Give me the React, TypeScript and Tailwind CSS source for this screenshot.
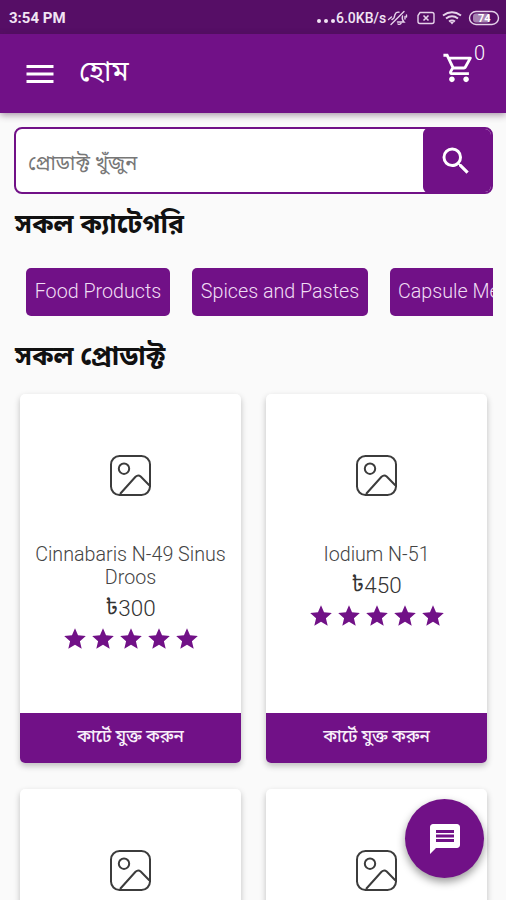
import React from "react";
import { MdMenu, MdOutlineShoppingCart, MdSearch, MdMessage, MdStar } from "react-icons/md";

function PlaceholderIcon() {
  return (
    <svg width="42" height="42" viewBox="0 0 42 42" fill="none" stroke="#3c3c3c" strokeWidth="2">
      <rect x="1" y="1" width="39" height="39" rx="8.5" />
      <circle cx="14" cy="13.7" r="5.2" />
      <path d="M10 39 L25.5 21.8 Q28.1 19.3 30.7 21.5 L39.5 30.5" />
    </svg>
  );
}

function StatusIcons() {
  return (
    <svg width="116" height="20" viewBox="0 0 116 20" fill="none" stroke="#e6d3ea" strokeWidth="1.4">
      <g strokeWidth="1.4" strokeLinecap="round">
        <path d="M5 11.5 Q7.5 10.5 7.8 7 Q8.8 3.8 12 4.2 M15.5 8 Q14.5 11.5 17 14 L10.5 14 M11 16 Q12.5 17 14 15.5" />
        <path d="M4 16.5 L17 3.5 M1.5 11.5 L4.5 9 M18 8.5 V11 M19.5 7 V9" />
      </g>
      <path d="M33 4.5 H45 Q47 4.5 47 6.5 V13.5 Q47 15.5 45 15.5 H33 Q31 15.5 31 13.5 V7.5 Z" />
      <path d="M36.5 7.5 L41.5 12.5 M41.5 7.5 L36.5 12.5" strokeWidth="1.6" />
      <path d="M56 7.5 Q65 1 74 7.5 M59 10.5 Q65 6 71 10.5 M62 13.5 Q65 11.5 68 13.5" strokeWidth="2" />
      <path d="M63 14 H67 L65 16.5 Z" fill="#e6d3ea" stroke="none" />
      <rect x="82.5" y="3.5" width="29" height="13" rx="6.5" />
      <rect x="86" y="5.5" width="17" height="9" rx="3" fill="#a783b2" stroke="none" />
      <text x="91" y="14" fill="#fff" stroke="none" fontSize="11" fontWeight="700" fontFamily="Roboto, sans-serif">74</text>
    </svg>
  );
}

function Product({ name, price }: { name?: string; price?: string }) {
  return (
    <article className="flex h-[369px] flex-col overflow-hidden rounded-[5px] bg-white shadow-[0_3px_6px_rgba(0,0,0,0.24)]">
      <div className="flex h-[149px] shrink-0 justify-center pt-[61px]">
        <PlaceholderIcon />
      </div>
      {name && (
        <>
          <div className="flex flex-1 flex-col items-center text-center font-light">
            <h3 className="w-[200px] text-[19.7px] leading-[23px] text-[#444]">{name}</h3>
            <p className="flex h-[38px] items-center text-[22.5px] leading-[38px] text-[#333]">
              <span className="text-[22px] font-normal">৳</span>{price}
            </p>
            <div className="-mt-[1px] flex gap-[2px] text-[#711187]">
              {[1, 2, 3, 4, 5].map((n) => <MdStar key={n} size={26} />)}
            </div>
          </div>
          <button className="h-[50px] shrink-0 bg-[#711187] pb-[3px] text-[17px] font-medium text-[#f8effa]">কার্টে যুক্ত করুন</button>
        </>
      )}
    </article>
  );
}

export default function App() {
  return (
    <div className="relative h-[900px] w-[506px] overflow-hidden bg-[#fafafa] font-['Roboto','Noto_Sans_Bengali','Noto_Sans',sans-serif]">
      <div className="flex h-[34px] items-center bg-[#560e66] pl-[9px] pt-[2px] text-[#f1e5f4]">
        <span className="w-[308px] text-[15px] font-bold">3:54 PM</span>
        <span className="flex w-[70px] items-baseline whitespace-nowrap text-[14px] font-medium">
          <span className="mr-[1px] flex w-[18px] gap-[3px]">
            <i className="h-[4px] w-[4px] rounded-full bg-current" />
            <i className="h-[4px] w-[4px] rounded-full bg-current" />
            <i className="h-[4px] w-[4px] rounded-full bg-current" />
          </span>
          6.0KB/s
        </span>
        <StatusIcons />
      </div>
      <header className="flex h-[79px] items-start bg-[#711187] pl-[22px] text-white shadow-[0_2px_7px_rgba(60,20,60,0.45)]">
        <MdMenu size={36} className="mt-[22px]" />
        <h1 className="ml-[21px] mt-[18px] w-[363px] text-[28px] leading-[40px]">হোম</h1>
        <MdOutlineShoppingCart size={34} className="mt-[17px] shrink-0" />
        <span className="-ml-[2px] mt-[7px] text-[20px] font-light leading-[24px]">0</span>
      </header>
      <main className="pl-[14px] pr-[13px] pt-[14px]">
        <div className="flex h-[67px] overflow-hidden rounded-[8px] border-2 border-[#711187] bg-white">
          <div className="flex flex-1 items-center pl-[12px] pt-[4px] text-[20px] text-[#777]">প্রোডাক্ট খুঁজুন</div>
          <button className="-my-px -mr-px flex w-[69px] items-center rounded-l-[6px] bg-[#711187] pl-[15px] text-white"><MdSearch size={36} /></button>
        </div>
        <h2 className="mt-[10px] h-[40px] pl-px text-[26.5px] font-bold leading-[40px] text-[#111]">সকল ক্যাটেগরি</h2>
        <div className="mt-[23px] flex gap-[22px] overflow-hidden pl-[12px] pt-px text-[19.7px] font-light text-[#f0def4]">
          <button className="h-[48px] w-[144px] shrink-0 whitespace-nowrap rounded-[5px] bg-[#711187]">Food Products</button>
          <button className="h-[48px] w-[176px] shrink-0 whitespace-nowrap rounded-[5px] bg-[#711187]">Spices and Pastes</button>
          <button className="h-[48px] w-[190px] shrink-0 whitespace-nowrap rounded-[5px] bg-[#711187] pl-[8px] text-left">Capsule Medicine</button>
        </div>
        <h2 className="mt-[20px] h-[40px] pl-px text-[26.5px] font-bold leading-[40px] text-[#111]">সকল প্রোডাক্ট</h2>
        <section className="mt-[18px] grid grid-cols-[221px_221px] gap-x-[25px] gap-y-[26px] pl-[6px]">
          <Product name="Cinnabaris N-49 Sinus Droos" price="300" />
          <Product name="Iodium N-51" price="450" />
          <Product />
          <Product />
        </section>
      </main>
      <button className="absolute left-[405px] top-[799px] flex h-[79px] w-[79px] items-center justify-center rounded-full bg-[#711187] text-white shadow-[0_4px_9px_rgba(0,0,0,0.4)]">
        <MdMessage size={36} />
      </button>
    </div>
  );
}
